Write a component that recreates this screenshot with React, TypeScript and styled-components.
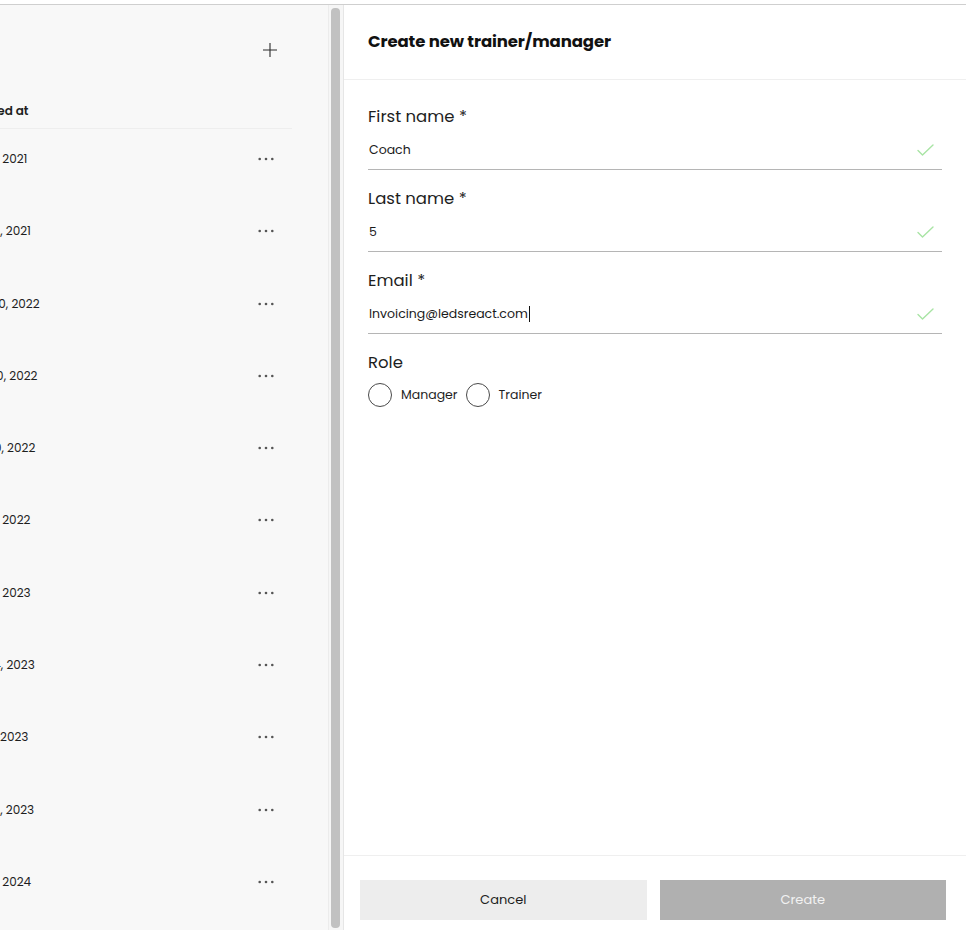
import React from "react";
import styled, { createGlobalStyle } from "styled-components";

const Global = createGlobalStyle`
  html, body { margin: 0; padding: 0; height: 100%; background: #ffffff; }
  body { font-family: "Poppins", Inter, "Liberation Sans", sans-serif; color: #1c1c1c; }
  #root { height: 100%; }
  * { box-sizing: border-box; }
`;

const Page = styled.div`
  height: 100vh;
  display: flex;
  flex-direction: column;
  padding-top: 4px;
  background: #fff;
`;

const Frame = styled.div`
  flex: 1;
  min-height: 0;
  display: flex;
  border-top: 1px solid #cfcfcf;
`;

const ListPanel = styled.div`
  width: 343px;
  flex: none;
  display: flex;
  min-height: 0;
  background: #f8f8f8;
`;

const ListContent = styled.div`
  width: 329px;
  flex: none;
  overflow: hidden;
  border-right: 1px solid #ececec;
`;

const ScrollTrack = styled.div`
  flex: 1;
  display: flex;
  padding: 3px 3px 2px 2px;
  background: #f6f6f6;
`;

const ScrollThumb = styled.div`
  flex: 1;
  border-radius: 4px;
  background: #c1c1c1;
`;

const ListInner = styled.div`
  width: 292px;
  overflow: hidden;
`;

const Toolbar = styled.div`
  height: 89px;
  display: flex;
  align-items: center;
  justify-content: flex-end;
  padding-right: 14px;
`;

const IconButton = styled.button`
  border: 0;
  background: transparent;
  padding: 0;
  display: flex;
  cursor: pointer;
  color: #2a2a2a;
`;

const Table = styled.div`
  margin-left: -37px;
`;

const Row = styled.div<{ $head?: boolean }>`
  display: grid;
  grid-template-columns: 1fr 52px;
  align-items: ${(p) => (p.$head ? "center" : "start")};
  height: ${(p) => (p.$head ? "35px" : "72.3px")};
  padding-top: ${(p) => (p.$head ? "0" : "22px")};
  border-bottom: ${(p) => (p.$head ? "1px solid #eeeeee" : "0")};
  font-size: 12px;
  font-weight: ${(p) => (p.$head ? 600 : 400)};
  color: #1e1e1e;
  line-height: 16px;
  white-space: nowrap;
`;

const DotsCell = styled.div`
  height: 16px;
  display: flex;
  align-items: center;
  justify-content: center;
  color: #555;
`;

const FormPanel = styled.div`
  flex: 1;
  min-width: 0;
  display: flex;
  flex-direction: column;
  border-left: 1px solid #e6e6e6;
  background: #fff;
`;

const Header = styled.div`
  height: 75px;
  flex: none;
  display: flex;
  align-items: center;
  padding: 0 24px 2px;
  border-bottom: 1px solid #efefef;
`;

const Title = styled.h2`
  margin: 0;
  font-size: 16.5px;
  font-weight: 700;
  color: #111;
  letter-spacing: -0.1px;
`;

const Body = styled.div`
  flex: 1;
  padding: 27px 24px 0 24px;
`;

const Field = styled.div`
  margin-bottom: 19px;
`;

const Label = styled.div<{ $gap?: number }>`
  font-size: 16.5px;
  line-height: 20px;
  color: #1e1e1e;
  margin-bottom: ${(p) => p.$gap ?? 4}px;
`;

const InputRow = styled.div`
  height: 39px;
  display: flex;
  align-items: center;
  justify-content: space-between;
  padding: 0 8px 0 1px;
  border-bottom: 1px solid #b5b5b5;
  font-size: 12.5px;
  color: #1a1a1a;
`;

const Value = styled.span`
  display: inline-flex;
  align-items: center;
`;

const Caret = styled.span`
  display: inline-block;
  width: 1px;
  height: 16px;
  background: #111;
  margin-left: 1px;
`;

const RadioGroup = styled.div`
  display: flex;
  align-items: center;
  gap: 8px;
  height: 24px;
`;

const RadioItem = styled.label`
  display: flex;
  align-items: center;
  gap: 9px;
  font-size: 12.5px;
  color: #1e1e1e;
  cursor: pointer;
`;

const RadioCircle = styled.span`
  width: 24px;
  height: 24px;
  border-radius: 50%;
  border: 1px solid #4a4a4a;
  background: #fff;
`;

const Footer = styled.div`
  flex: none;
  height: 75px;
  border-top: 1px solid #efefef;
  display: grid;
  grid-template-columns: 1fr 1fr;
  gap: 13px;
  padding: 24px 20px 10px 16px;
`;

const Button = styled.button<{ $primary?: boolean }>`
  height: 40px;
  border: 0;
  font-family: inherit;
  font-size: 13px;
  cursor: pointer;
  background: ${(p) => (p.$primary ? "#b0b0b0" : "#ededed")};
  color: ${(p) => (p.$primary ? "#f2f2f2" : "#1e1e1e")};
`;

const Plus = () => (
  <svg width="16" height="16" viewBox="0 0 16 16" fill="none" stroke="currentColor" strokeWidth="1.1">
    <path d="M8 1v14M1 8h14" />
  </svg>
);

const Dots = () => (
  <svg width="16" height="4" viewBox="0 0 16 4" fill="currentColor">
    <circle cx="1.7" cy="2" r="1.3" />
    <circle cx="8" cy="2" r="1.3" />
    <circle cx="14.3" cy="2" r="1.3" />
  </svg>
);

const Check = () => (
  <svg width="17" height="12" viewBox="0 0 17 12" fill="none" stroke="#a8e4a4" strokeWidth="1.4" strokeLinecap="round" strokeLinejoin="round">
    <path d="M1 6.5l4.5 4.5L16 1" />
  </svg>
);

const dates = [
  "Mar 4, 2021",
  "Dec 12, 2021",
  "May 20, 2022",
  "Nov 30, 2022",
  "Aug 10, 2022",
  "Nov 8, 2022",
  "Mar 9, 2023",
  "Dec 14, 2023",
  "Apr 5, 2023",
  "Dec 12, 2023",
  "Mar 4, 2024",
];

const fields = [
  { label: "First name *", value: "Coach" },
  { label: "Last name *", value: "5" },
  { label: "Email *", value: "Invoicing@ledsreact.com", caret: true },
];

export default function App() {
  return (
    <>
      <Global />
      <Page>
        <Frame>
          <ListPanel>
            <ListContent>
              <ListInner>
                <Toolbar>
                  <IconButton aria-label="Add">
                    <Plus />
                  </IconButton>
                </Toolbar>
                <Table>
                  <Row $head>
                    <div>Created at</div>
                    <div />
                  </Row>
                  {dates.map((d) => (
                    <Row key={d}>
                      <div>{d}</div>
                      <DotsCell>
                        <Dots />
                      </DotsCell>
                    </Row>
                  ))}
                </Table>
              </ListInner>
            </ListContent>
            <ScrollTrack>
              <ScrollThumb />
            </ScrollTrack>
          </ListPanel>
          <FormPanel>
            <Header>
              <Title>Create new trainer/manager</Title>
            </Header>
            <Body>
              {fields.map((f) => (
                <Field key={f.label}>
                  <Label>{f.label}</Label>
                  <InputRow>
                    <Value>
                      {f.value}
                      {f.caret && <Caret />}
                    </Value>
                    <Check />
                  </InputRow>
                </Field>
              ))}
              <Field>
                <Label $gap={10}>Role</Label>
                <RadioGroup>
                  <RadioItem>
                    <RadioCircle />
                    Manager
                  </RadioItem>
                  <RadioItem>
                    <RadioCircle />
                    Trainer
                  </RadioItem>
                </RadioGroup>
              </Field>
            </Body>
            <Footer>
              <Button>Cancel</Button>
              <Button $primary>Create</Button>
            </Footer>
          </FormPanel>
        </Frame>
      </Page>
    </>
  );
}
